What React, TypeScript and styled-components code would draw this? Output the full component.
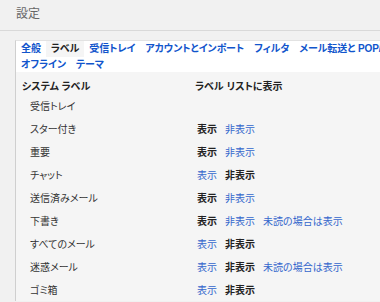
import React from 'react'
import styled, { createGlobalStyle } from 'styled-components'

const GlobalStyle = createGlobalStyle`
  html, body {
    margin: 0;
    padding: 0;
    background: #f1f1f1;
    overflow: hidden;
  }
  body {
    font-family: "Liberation Sans", "Noto Sans CJK JP", sans-serif;
    font-feature-settings: "palt";
    color: #222;
  }
`

const tabRows = [
  ['全般', 'ラベル', '受信トレイ', 'アカウントとインポート', 'フィルタ', 'メール転送と POP/IMAP'],
  ['オフライン', 'テーマ'],
]

type Choice = { text: string; on?: boolean }

const labels: { name: string; choices: Choice[] }[] = [
  { name: '受信トレイ', choices: [] },
  { name: 'スター付き', choices: [{ text: '表示', on: true }, { text: '非表示' }] },
  { name: '重要', choices: [{ text: '表示', on: true }, { text: '非表示' }] },
  { name: 'チャット', choices: [{ text: '表示' }, { text: '非表示', on: true }] },
  { name: '送信済みメール', choices: [{ text: '表示', on: true }, { text: '非表示' }] },
  {
    name: '下書き',
    choices: [{ text: '表示', on: true }, { text: '非表示' }, { text: '未読の場合は表示' }],
  },
  { name: 'すべてのメール', choices: [{ text: '表示' }, { text: '非表示', on: true }] },
  {
    name: '迷惑メール',
    choices: [{ text: '表示' }, { text: '非表示', on: true }, { text: '未読の場合は表示' }],
  },
  { name: 'ゴミ箱', choices: [{ text: '表示' }, { text: '非表示', on: true }] },
]

function App() {
  return (
    <Page>
      <GlobalStyle />
      <Header>
        <Title>設定</Title>
      </Header>
      <Main>
        <Panel>
          <TabBar>
            {tabRows.map((row, i) => (
              <TabRow key={i} $h={i === 0 ? 16 : 14}>
                {row.map((t) => (
                  <Tab key={t} $active={t === 'ラベル'}>
                    {t}
                  </Tab>
                ))}
              </TabRow>
            ))}
          </TabBar>
          <Content>
            <HeadRow>
              <HeadCell>システム ラベル</HeadCell>
              <HeadCell>ラベル リストに表示</HeadCell>
            </HeadRow>
            {labels.map((l) => (
              <LabelRow key={l.name}>
                <LabelName>{l.name}</LabelName>
                <Choices>
                  {l.choices.map((c) => (
                    <Option key={c.text} $on={!!c.on}>
                      {c.text}
                    </Option>
                  ))}
                </Choices>
              </LabelRow>
            ))}
          </Content>
        </Panel>
      </Main>
    </Page>
  )
}

export default App

const Page = styled.div`
  width: 380px;
  height: 302px;
  overflow: hidden;
  background: #f1f1f1;
`

const Header = styled.div`
  height: 31px;
  border-bottom: 1px solid #d9d9d9;
  padding: 5px 0 0 16px;
  box-sizing: border-box;
`

const Title = styled.div`
  font-size: 12px;
  line-height: 18px;
  color: #666;
`

const Main = styled.div`
  padding: 9px 0 0 15px;
`

const Panel = styled.div`
  width: 700px;
  background: #f5f5f5;
  border-left: 1px solid #cfcfcf;
  border-top: 1px solid #e2e2e2;
`

const TabBar = styled.div`
  background: #fff;
  padding-bottom: 1px;
`

const TabRow = styled.div<{ $h: number }>`
  display: flex;
  white-space: nowrap;
  height: ${(p) => p.$h}px;
`

const Tab = styled.div<{ $active: boolean }>`
  padding: 0 5px;
  font-size: 10px;
  font-weight: bold;
  line-height: 16px;
  letter-spacing: -0.1px;
  color: ${(p) => (p.$active ? '#222' : '#15c')};
  background: ${(p) => (p.$active ? '#f5f5f5' : 'transparent')};
`

const Content = styled.div`
  padding: 4px 0 0 6px;
`

const HeadRow = styled.div`
  display: grid;
  grid-template-columns: 173px auto;
  height: 18px;
  align-items: center;
`

const HeadCell = styled.div`
  font-size: 10px;
  font-weight: bold;
  color: #222;
`

const LabelRow = styled.div`
  display: grid;
  grid-template-columns: 173px auto;
  height: 23px;
  align-items: center;
`

const LabelName = styled.div`
  padding-left: 8px;
  font-size: 10px;
  color: #333;
`

const Choices = styled.div`
  display: flex;
  gap: 8px;
  padding-left: 2px;
`

const Option = styled.span<{ $on: boolean }>`
  font-size: 10px;
  font-weight: ${(p) => (p.$on ? 'bold' : 'normal')};
  color: ${(p) => (p.$on ? '#222' : '#3366cc')};
  cursor: ${(p) => (p.$on ? 'default' : 'pointer')};
`
